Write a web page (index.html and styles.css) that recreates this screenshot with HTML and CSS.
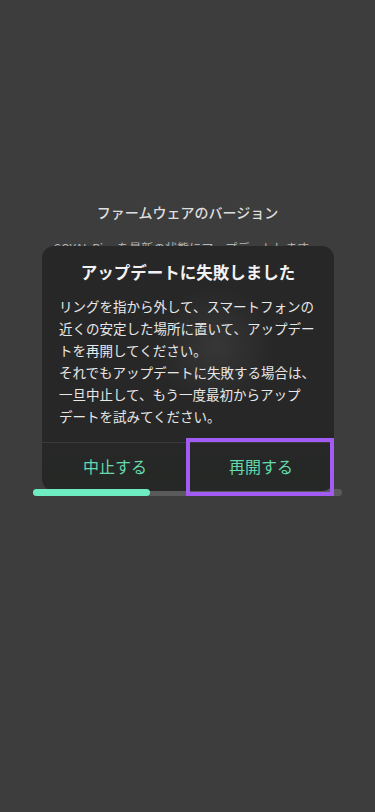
FILE: index.html
```html
<!DOCTYPE html>
<html lang="ja">
<head>
<meta charset="utf-8">
<meta name="viewport" content="width=device-width, initial-scale=1">
<link rel="stylesheet" href="styles.css">
</head>
<body>
<div class="screen">
  <h1 class="page-title">ファームウェアのバージョン</h1>
  <p class="page-sub">SOYAL Ringを最新の状態にアップデートします</p>
  <div class="progress">
    <div class="progress-fill" style="width: 38%"></div>
  </div>

  <div class="dialog">
    <h2 class="dialog-title">アップデートに失敗しました</h2>
    <p class="dialog-body">リングを指から外して、スマートフォンの近くの安定した場所に置いて、アップデートを再開してください。<br>それでもアップデートに失敗する場合は、一旦中止して、もう一度最初からアップデートを試みてください。</p>
    <div class="dialog-actions">
      <button class="dialog-btn">中止する</button>
      <button class="dialog-btn">再開する</button>
    </div>
  </div>
  <div class="highlight"></div>
</div>
</body>
</html>
```

FILE: styles.css
```css
* { box-sizing: border-box; }
html, body {
  margin: 0;
  padding: 0;
  background: #3d3d3d;
  font-family: "Noto Sans CJK JP", "Noto Sans", sans-serif;
}
.screen {
  position: relative;
  width: 375px;
  height: 812px;
  display: flex;
  flex-direction: column;
  align-items: center;
  padding-top: 202px;
  overflow: hidden;
}
.page-title {
  margin: 0;
  font-size: 14px;
  line-height: 20px;
  font-weight: 500;
  color: #dedede;
}
.page-sub {
  margin: 17px 12px 0 0;
  font-size: 12px;
  line-height: 18px;
  color: #b4b4b4;
}
.progress {
  position: relative;
  margin-top: 232px;
  width: 309px;
  height: 7px;
  border-radius: 4px;
  background: #5a5a5a;
  align-self: flex-start;
  margin-left: 33px;
}
.progress-fill {
  position: relative;
  z-index: 3;
  height: 100%;
  border-radius: 4px;
  background: #6eecc2;
}
.dialog {
  position: absolute;
  z-index: 2;
  left: 42px;
  top: 246px;
  width: 292px;
  height: 245px;
  border-radius: 12px;
  background:
    radial-gradient(circle at 173px 100px, rgba(255,255,255,0.075) 0, rgba(255,255,255,0.03) 35px, rgba(255,255,255,0) 60px),
    linear-gradient(#272727, #272727 75%, #252826);
  display: flex;
  flex-direction: column;
  padding-top: 14px;
}
.dialog-title {
  margin: 0;
  text-align: center;
  font-size: 16.5px;
  line-height: 24px;
  font-weight: 700;
  color: #f2f2f2;
}
.dialog-body {
  margin: 11px 0 0;
  padding: 0 16px 0 17px;
  font-size: 13.5px;
  line-height: 22px;
  color: #e8e8e8;
  line-break: strict;
}
.dialog-actions {
  margin-top: auto;
  height: 49px;
  border-top: 1px solid #3a3a3a;
  display: flex;
}
.dialog-btn {
  flex: 1;
  border: 0;
  background: transparent;
  font-family: inherit;
  font-size: 16px;
  color: #63d9ad;
  padding: 0 0 2px;
}
.highlight {
  position: absolute;
  z-index: 4;
  left: 186px;
  top: 438px;
  width: 148px;
  height: 58px;
  border: 4px solid #a25cf4;
}
```
